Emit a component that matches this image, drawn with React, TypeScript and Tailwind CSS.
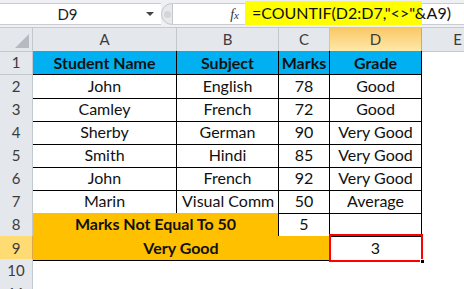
import React from 'react';

const font = { fontFamily: 'Lato, "Open Sans", sans-serif' };

type Row = { n: number; a: string; b: string; c: string; d: string };

const rows: Row[] = [
  { n: 2, a: 'John', b: 'English', c: '78', d: 'Good' },
  { n: 3, a: 'Camley', b: 'French', c: '72', d: 'Good' },
  { n: 4, a: 'Sherby', b: 'German', c: '90', d: 'Very Good' },
  { n: 5, a: 'Smith', b: 'Hindi', c: '85', d: 'Very Good' },
  { n: 6, a: 'John', b: 'French', c: '92', d: 'Very Good' },
  { n: 7, a: 'Marin', b: 'Visual Comm', c: '50', d: 'Average' },
];

const cols = 'grid grid-cols-[33px_144px_102px_51px_92px_72px]';
const rowHead = 'flex items-center justify-center bg-[#e4e7ec] border-r border-b border-[#c3c8cf] text-[#3c3c3c] text-[15px]';
const cell = 'flex items-center justify-center border-r border-b border-black text-[#111] whitespace-nowrap overflow-hidden';

const App: React.FC = () => {
  return (
    <div className="w-[464px] h-[289px] overflow-hidden bg-white text-[16px]" style={font}>
      {/* formula bar */}
      <div className="h-[28px] flex bg-[#eef0f3] border-b border-[#c6cad0] pt-[3px]">
        <div className="w-[161px] h-[22px] bg-white border-y border-[#c9ccd1] flex items-center relative">
          <span className="flex-1 text-center pr-[26px] text-[#222] text-[15px]">D9</span>
          <span className="absolute left-[146px] top-[8px] w-0 h-0 border-l-[4px] border-r-[4px] border-t-[4px] border-l-transparent border-r-transparent border-t-[#444]" />
        </div>
        <div className="w-[12px] h-[22px] bg-[#e7e9ec] border border-[#c3c6cb] rounded-l-full flex items-center justify-center">
          <div className="w-[7px] h-[7px] rounded-full bg-[#d3d5d8]" />
        </div>
        <div className="flex-1 h-[22px] bg-white border-y border-[#c9ccd1] flex items-center">
          <span className="w-[72px] text-right pr-[6px] italic text-[#333] text-[14px]" style={{ fontFamily: '"Liberation Serif", serif' }}>
            f<span className="text-[11px]">x</span>
          </span>
          <div className="w-[177px] h-[24px] -mt-[2px] bg-[#ffff00] flex items-center pl-[7px] text-[#111] whitespace-nowrap">
            =COUNTIF(D2:D7,"&lt;&gt;"&amp;A9)
          </div>
        </div>
      </div>

      {/* column headers */}
      <div className={`${cols} h-[23px]`}>
        <div className="bg-[#e4e7ec] border-r border-b border-[#c3c8cf] relative">
          <div className="absolute right-[3px] bottom-[3px] w-0 h-0 border-b-[14px] border-l-[14px] border-b-[#b6bbc2] border-l-transparent" />
        </div>
        {['A', 'B', 'C'].map((c) => (
          <div key={c} className={rowHead}>{c}</div>
        ))}
        <div className="flex items-center justify-center bg-gradient-to-b from-[#f9c865] to-[#fee9a8] border-r border-b border-[#e0a64a] text-[#3c3c3c] text-[15px]">D</div>
        <div className={rowHead}>E</div>
      </div>

      {/* row 1 */}
      <div className={`${cols} h-[24px]`}>
        <div className={rowHead}>1</div>
        <div className={`${cell} bg-[#00b0f0] font-bold`}>Student Name</div>
        <div className={`${cell} bg-[#00b0f0] font-bold`}>Subject</div>
        <div className={`${cell} bg-[#00b0f0] font-bold`}>Marks</div>
        <div className={`${cell} bg-[#00b0f0] font-bold`}>Grade</div>
        <div />
      </div>

      {rows.map((r) => (
        <div key={r.n} className={`${cols} h-[23px]`}>
          <div className={rowHead}>{r.n}</div>
          <div className={cell}>{r.a}</div>
          <div className={`${cell} ${r.b === 'Visual Comm' ? 'justify-start pl-[5px]' : ''}`}>{r.b}</div>
          <div className={cell}>{r.c}</div>
          <div className={cell}>{r.d}</div>
          <div />
        </div>
      ))}

      {/* row 8 */}
      <div className={`${cols} h-[23px]`}>
        <div className={rowHead}>8</div>
        <div className={`${cell} col-span-2 bg-[#ffc000] font-bold`}>Marks Not Equal To 50</div>
        <div className={cell}>5</div>
        <div className={cell}></div>
        <div />
      </div>

      {/* row 9 */}
      <div className={`${cols} h-[23px]`}>
        <div className="flex items-center justify-center bg-[#ffdc73] border-r border-b border-[#e0a64a] text-[#3c3c3c] text-[15px]">9</div>
        <div className={`${cell} col-span-3 bg-[#ffc000] font-bold`}>Very Good</div>
        <div className={`${cell} relative overflow-visible`}>
          3
          <div className="absolute -top-[2px] -left-[1px] -right-[2px] -bottom-[2px] border-2 border-[#ff0000]" />
          <div className="absolute -right-[4px] -bottom-[4px] w-[5px] h-[5px] bg-black border border-white" />
        </div>
        <div />
      </div>

      {[10, 11].map((n) => (
        <div key={n} className={`${cols} h-[23px]`}>
          <div className={rowHead}>{n}</div>
          <div /><div /><div /><div /><div />
        </div>
      ))}
    </div>
  );
};

export default App;
